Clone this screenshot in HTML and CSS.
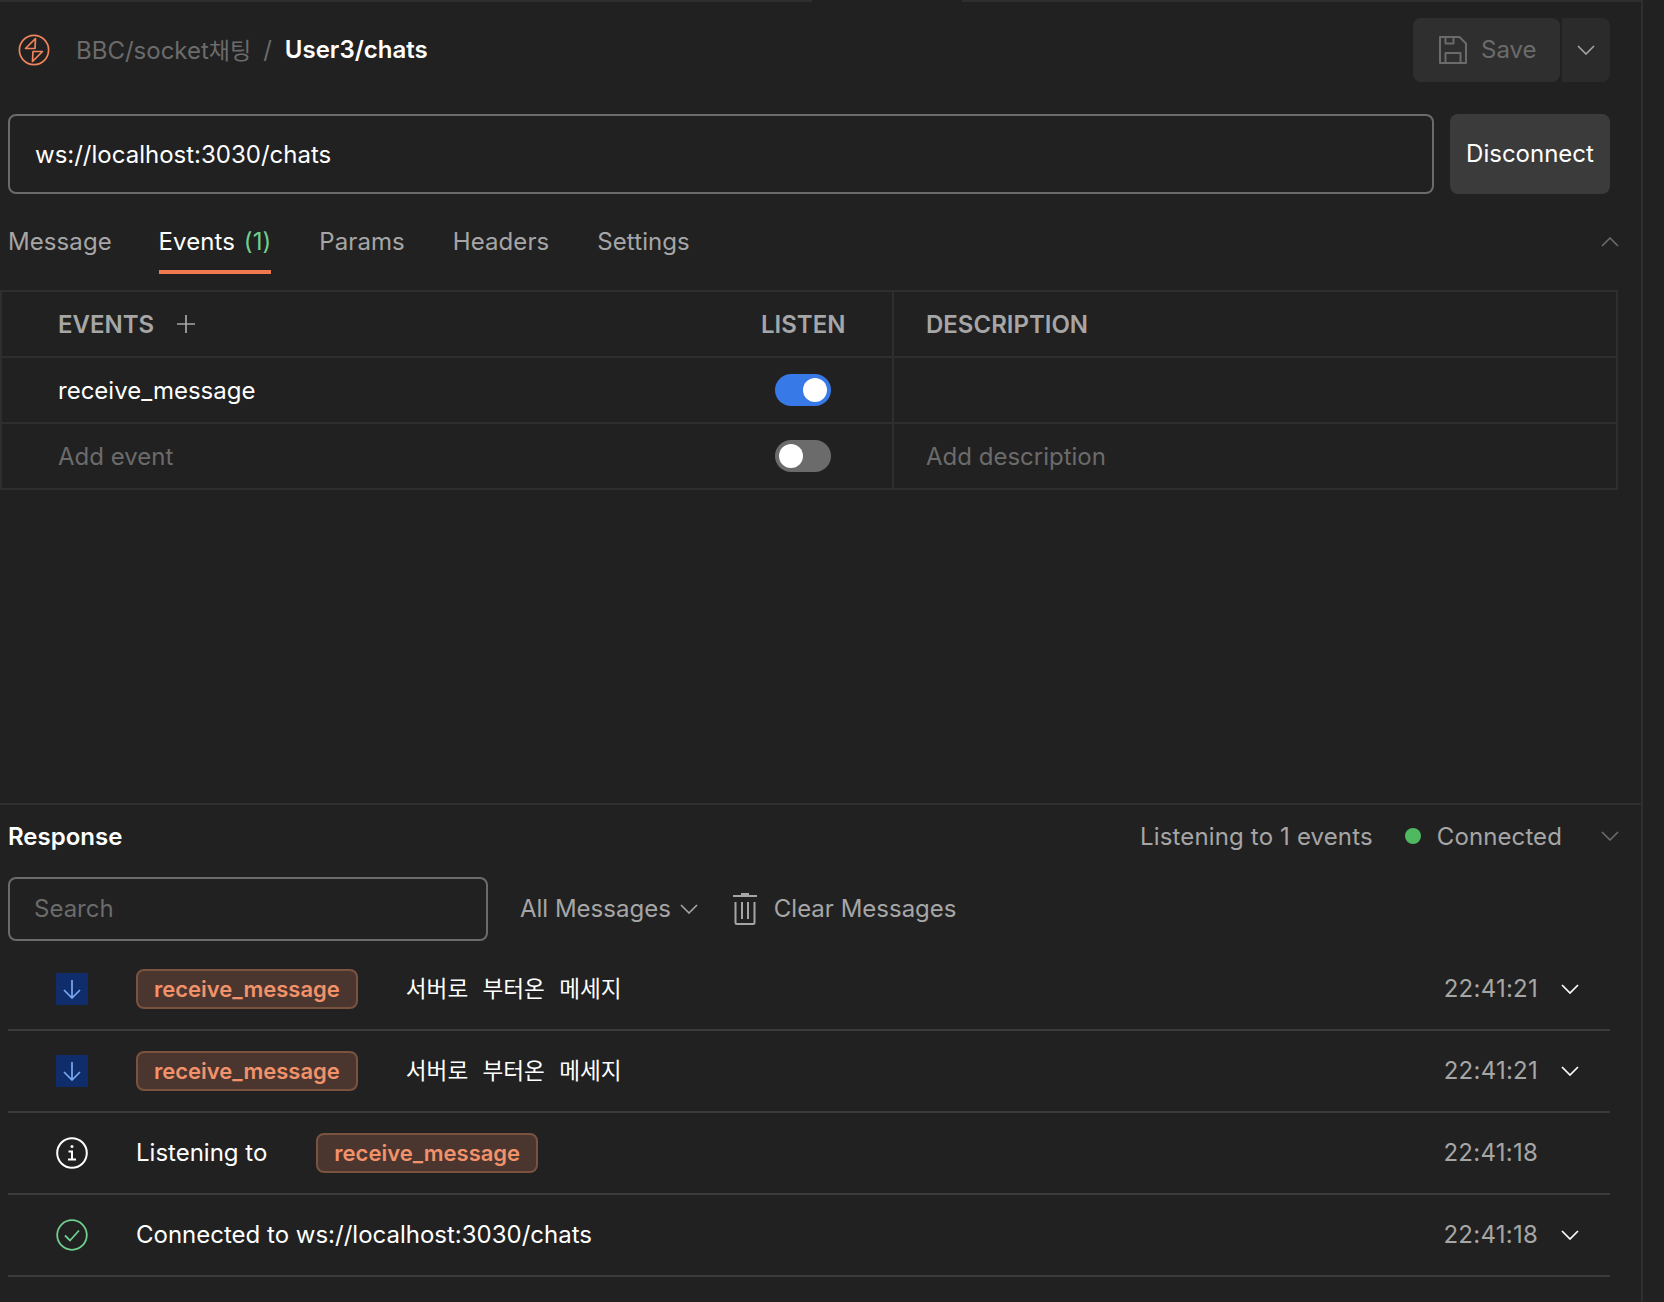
FILE: index.html
```html
<!DOCTYPE html>
<html lang="en">
<head>
<meta charset="utf-8">
<title>User3/chats</title>
<link rel="stylesheet" href="styles.css">
</head>
<body>
<div class="app">
  <main class="pane">
    <div class="topline"><span class="gap"></span></div>
    <header class="header">
      <svg class="logo" viewBox="0 0 32 32" fill="none" stroke="#f0845c" stroke-width="1.7" stroke-linejoin="round"><circle cx="16" cy="16" r="14.6"/><path d="M17.500 4.500 7.500 14.500H17z"/><path d="M24.500 17.500H15L14.500 27.500z"/></svg>
      <span class="crumb">BBC/socket<span class="ko-small">채팅</span></span>
      <span class="slash">/</span>
      <span class="title">User3/chats</span>
      <div class="save-group">
        <button class="save">
          <svg class="save-icon" viewBox="0 0 28 28" fill="none" stroke="#6b6b6b" stroke-width="2" stroke-linejoin="round"><path d="M1 1h19.500L27 7.500V27H1z"/><path d="M6.500 1v6.500h8V1"/><path d="M6.500 27V17h15v10"/></svg>
          <span class="save-label">Save</span>
        </button>
        <button class="save-more"><svg class="chev" viewBox="0 0 18 10" fill="none" stroke="#a6a6a6" stroke-width="1.6"><path d="M1 1l8 8 8-8"/></svg></button>
      </div>
    </header>
    <div class="url-row">
      <div class="url">ws://localhost:3030/chats</div>
      <button class="disconnect">Disconnect</button>
    </div>
    <nav class="tabs">
      <span class="tab">Message</span>
      <span class="tab active">Events <em>(1)</em></span>
      <span class="tab">Params</span>
      <span class="tab">Headers</span>
      <span class="tab">Settings</span>
      <svg class="tabs-collapse" viewBox="0 0 18 10" fill="none" stroke="#6b6b6b" stroke-width="1.6"><path d="M1 9l8-8 8 8"/></svg>
    </nav>
    <section class="events">
      <div class="ev-row head">
        <div class="c-name">EVENTS <svg class="plus" viewBox="0 0 18 18" fill="none" stroke="#a6a6a6" stroke-width="1.7"><path d="M9 0v18M0 9h18"/></svg></div>
        <div class="c-listen">LISTEN</div>
        <div class="c-desc">DESCRIPTION</div>
      </div>
      <div class="ev-row">
        <div class="c-name value">receive_message</div>
        <div class="c-listen"><span class="toggle on"></span></div>
        <div class="c-desc"></div>
      </div>
      <div class="ev-row">
        <div class="c-name hint">Add event</div>
        <div class="c-listen"><span class="toggle"></span></div>
        <div class="c-desc hint">Add description</div>
      </div>
    </section>
    <div class="spacer"></div>
    <section class="response">
      <div class="resp-head">
        <strong>Response</strong>
        <span class="listening">Listening to 1 events</span>
        <span class="dot"></span>
        <span class="connected">Connected</span>
        <svg class="resp-chev" viewBox="0 0 18 10" fill="none" stroke="#6b6b6b" stroke-width="1.6"><path d="M1 1l8 8 8-8"/></svg>
      </div>
      <div class="filters">
        <div class="search">Search</div>
        <span class="all">All Messages</span>
        <svg class="all-chev" viewBox="0 0 18 10" fill="none" stroke="#a6a6a6" stroke-width="1.6"><path d="M1 1l8 8 8-8"/></svg>
        <svg class="trash" viewBox="0 0 24 32" fill="none" stroke="#a6a6a6" stroke-width="2"><path d="M0 3h24"/><path d="M8 1h8"/><path d="M2.500 9v20.500q0 1.500 1.500 1.500h16q1.500 0 1.500-1.500V9M9 9v17M15 9v17"/></svg>
        <span class="clear">Clear Messages</span>
      </div>
      <ul class="log">
        <li class="msg">
          <span class="lead"><span class="down"><svg viewBox="0 0 18 20" fill="none" stroke="#79a8f0" stroke-width="1.7"><path d="M9 1v18M1 11l8 8 8-8"/></svg></span></span>
          <span class="tag">receive_message</span>
          <span class="body ko">서버로 부터온 메세지</span>
          <time>22:41:21</time>
          <svg class="row-chev" viewBox="0 0 18 10" fill="none" stroke="#fff" stroke-width="1.7"><path d="M1 1l8 8 8-8"/></svg>
        </li>
        <li class="msg">
          <span class="lead"><span class="down"><svg viewBox="0 0 18 20" fill="none" stroke="#79a8f0" stroke-width="1.7"><path d="M9 1v18M1 11l8 8 8-8"/></svg></span></span>
          <span class="tag">receive_message</span>
          <span class="body ko">서버로 부터온 메세지</span>
          <time>22:41:21</time>
          <svg class="row-chev" viewBox="0 0 18 10" fill="none" stroke="#fff" stroke-width="1.7"><path d="M1 1l8 8 8-8"/></svg>
        </li>
        <li class="msg">
          <span class="lead"><svg class="round" viewBox="0 0 32 32" fill="none" stroke="#fff" stroke-width="2"><circle cx="16" cy="16" r="14.800"/><path d="M12.500 14.500h3.500v8M12 22.500h8"/><circle cx="16" cy="9.500" r="1.500" fill="#fff" stroke="none"/></svg></span>
          <span class="plain">Listening to</span>
          <span class="tag">receive_message</span>
          <time>22:41:18</time>
          <span class="row-chev"></span>
        </li>
        <li class="msg">
          <span class="lead"><svg class="round" viewBox="0 0 32 32" fill="none" stroke="#6fcf8f" stroke-width="1.8"><circle cx="16" cy="16" r="14.800"/><path d="M9 16.500l5 5 9-10"/></svg></span>
          <span class="plain">Connected to ws://localhost:3030/chats</span>
          <time>22:41:18</time>
          <svg class="row-chev" viewBox="0 0 18 10" fill="none" stroke="#fff" stroke-width="1.7"><path d="M1 1l8 8 8-8"/></svg>
        </li>
      </ul>
    </section>
  </main>
</div>
</body>
</html>
```
FILE: styles.css
```css
* { box-sizing: border-box; }
html, body { margin: 0; height: 100%; }
body {
  background: #212121;
  color: #fff;
  font-family: Inter, "Noto Sans CJK KR", sans-serif;
  font-size: 24px;
  overflow: hidden;
}
button { font: inherit; border: 0; color: inherit; }
.app { width: 1664px; height: 1302px; display: flex; }
.pane {
  width: 1643px;
  height: 1302px;
  border-right: 2px solid #2f2f2f;
  display: flex;
  flex-direction: column;
}
.topline { height: 2px; background: #2f2f2f; flex: none; padding-left: 812px; }
.gap { display: block; width: 150px; height: 2px; background: #212121; }

.header { height: 96px; padding: 0 31px 0 18px; display: flex; align-items: center; flex: none; }
.logo { width: 32px; height: 32px; flex: none; margin-right: 26px; }
.crumb { color: #6b6b6b; padding-bottom: 2px; }
.ko-small { font-size: 23px; }
.slash { color: #6b6b6b; margin: 0 13px 0 12px; padding-bottom: 2px; }
.title { font-weight: 600; padding-bottom: 2px; }
.save-group { margin-left: auto; display: flex; gap: 2px; }
.save {
  width: 147px; height: 64px; background: #2f2f2f; color: #6b6b6b;
  border-radius: 8px;
  display: flex; align-items: center; padding: 0 0 0 26px; gap: 14px;
}
.save-label { padding-bottom: 2px; }
.save-icon { width: 28px; height: 28px; }
.save-more { width: 48px; height: 64px; background: #2b2b2b; border-radius: 0 8px 8px 0; display: flex; align-items: center; justify-content: center; padding: 0; }
.chev { width: 18px; height: 10px; }

.url-row { display: flex; gap: 16px; padding: 0 31px 0 8px; flex: none; height: 80px; margin-top: 16px; }
.url {
  flex: 1; border: 2px solid #6b6b6b; border-radius: 8px;
  display: flex; align-items: center; padding: 0 25px;
}
.disconnect { width: 160px; background: #3b3b3b; border-radius: 8px; padding: 0 0 2px; }

.tabs { display: flex; gap: 48px; padding: 0 0 0 8px; height: 80px; margin-top: 16px; flex: none; }
.tab { color: #a6a6a6; height: 64px; line-height: 64px; letter-spacing: 0.08px; }
.tab:first-child { margin-right: -1.200px; }
.tab.active { color: #fff; border-bottom: 4px solid #ef7a4e; }
.tab em { font-style: normal; color: #6fcf8f; margin-left: 2px; }
.tabs-collapse { width: 18px; height: 10px; margin-left: auto; margin-right: 22px; margin-top: 27px; }

.events { width: 1618px; border-top: 2px solid #2f2f2f; border-right: 2px solid #2f2f2f; border-left: 2px solid #2f2f2f; flex: none; }
.ev-row { display: flex; height: 66px; border-bottom: 2px solid #2f2f2f; align-items: stretch; }
.c-name { width: 759px; padding-left: 56px; display: flex; align-items: center; }
.c-listen { width: 133px; display: flex; align-items: center; border-right: 2px solid #2f2f2f; }
.c-desc { flex: 1; padding-left: 32px; display: flex; align-items: center; }
.head { color: #a6a6a6; font-weight: 600; }
.plus { width: 18px; height: 18px; margin-left: 23px; }
.hint { color: #6b6b6b; }
.toggle { width: 56px; height: 32px; border-radius: 16px; background: #6b6b6b; display: block; margin-left: 14px; position: relative; }
.toggle::after { content: ""; position: absolute; top: 4px; left: 4px; width: 24px; height: 24px; border-radius: 50%; background: #fff; }
.toggle.on { background: #3779e6; }
.toggle.on::after { left: 28px; }

.spacer { flex: 1; }
.response { border-top: 2px solid #2f2f2f; flex: none; padding: 0 0 25px 8px; }
.resp-head { height: 62px; margin-bottom: 10px; display: flex; align-items: center; padding-right: 22px; }
.resp-head strong { font-weight: 600; }
.listening { margin-left: auto; color: #a6a6a6; letter-spacing: 0.15px; }
.dot { width: 16px; height: 16px; background: #4fb95f; border-radius: 50%; margin: 0 16px 0 32px; }
.connected { color: #a6a6a6; letter-spacing: 0.1px; }
.resp-chev { width: 18px; height: 10px; margin-left: 39px; }

.filters { height: 64px; display: flex; align-items: center; color: #a6a6a6; }
.search { width: 480px; height: 64px; border: 2px solid #6b6b6b; border-radius: 8px; display: flex; align-items: center; padding: 0 24px 2px; color: #6b6b6b; }
.all { margin-left: 32px; padding-bottom: 2px; }
.all-chev { width: 18px; height: 10px; margin-left: 9px; }
.trash { width: 24px; height: 32px; margin-left: 35px; }
.clear { margin-left: 17px; padding-bottom: 2px; }

.log { list-style: none; margin: 8px 0 0; padding: 0; width: 1602px; }
.msg { height: 82px; border-bottom: 2px solid #3b3b3b; display: flex; align-items: center; }
.lead { width: 128px; padding-left: 48px; display: flex; align-items: center; flex: none; }
.down { width: 32px; height: 32px; background: #0f2d6b; display: flex; align-items: center; justify-content: center; }
.down svg { width: 18px; height: 20px; }
.round { width: 32px; height: 32px; }
.plain { padding-bottom: 2px; }
.tag { height: 40px; padding: 0 16px; border: 2px solid #7a5240; border-radius: 8px; background: #4a362f; color: #f2926b; font-weight: 600; font-size: 22px; display: flex; align-items: center; }
.body { margin-left: 48px; }
.plain + .tag { margin-left: 49px; }
.ko { font-size: 22.600px; word-spacing: 8px; padding-bottom: 4px; }
time { margin-left: auto; color: #a6a6a6; letter-spacing: 0.25px; padding-bottom: 2px; }
.row-chev { width: 18px; height: 10px; margin-left: 23px; margin-right: 31px; display: block; }
```
